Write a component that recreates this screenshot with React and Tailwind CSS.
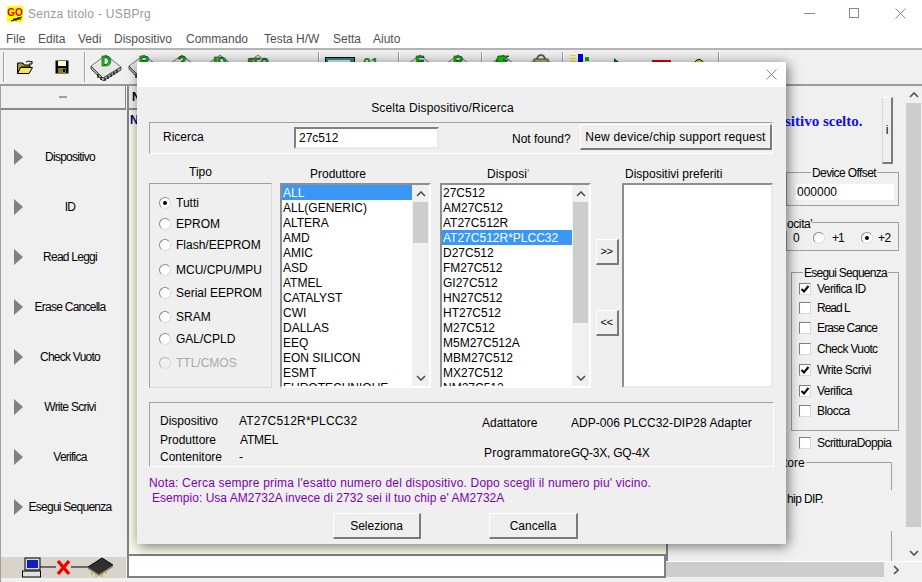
const font = { fontFamily: '"Liberation Sans", Arial, sans-serif' };

function Chip({ label, size = 14 }) {
  return (
    <svg width="32" height="28" viewBox="0 0 32 28" className="shrink-0">
      <path d="M1 13 L16 2 L31 14 L13 25 Z" fill="#e6e6e6" stroke="#444" strokeWidth="0.7" />
      <path d="M1 13 L1 16 L13 28 L31 17 L31 14 L13 25 Z" fill="#a8a8a8" stroke="#333" strokeWidth="0.8" />
      <path d="M8 21 L8 25 M11 24 L11 27 M15 25 L15 28 M18 23 L18 26 M21 21 L21 24 M24 19 L24 22 M27 17 L27 20" stroke="#111" strokeWidth="1.3" />
      <text x="16" y="13" fontSize={size} fontWeight="700" textAnchor="middle" fill="#00e000" stroke="#000" strokeWidth="0.5" fontFamily="Liberation Sans">{label}</text>
    </svg>
  );
}

function Sep() {
  return <div className="w-[2px] h-[30px] border-l border-r border-l-[#a0a0a0] border-r-white shrink-0" />;
}

function Cell({ children }) {
  return <div className="w-[38px] flex justify-center shrink-0">{children}</div>;
}

function Triangle() {
  return <div className="w-0 h-0 border-y-[8px] border-y-transparent border-l-[9px] border-l-[#808080] shrink-0" />;
}

function SideItem({ label }) {
  return (
    <div className="h-[50px] flex items-center pl-[13px]">
      <Triangle />
      <div className="flex-1 text-center text-[12px] tracking-[-0.75px] text-black pr-[9px] whitespace-nowrap">{label}</div>
    </div>
  );
}

function Radio({ checked, disabled }) {
  return (
    <span className={`w-[12px] h-[12px] rounded-full border ${disabled ? "border-[#b0b0b0] bg-[#efefef]" : "border-[#8a8a8a] bg-white"} border-r-[#dcdcdc] border-b-[#dcdcdc] flex items-center justify-center shrink-0`}>
      {checked && <span className="w-[4px] h-[4px] rounded-full bg-black" />}
    </span>
  );
}

function RadioRow({ label, checked, disabled, mt }) {
  return (
    <div className={`flex items-center gap-[5px] h-[15px] ${mt}`}>
      <Radio checked={checked} disabled={disabled} />
      <span className={disabled ? "text-[#a8a8a8]" : "text-black"}>{label}</span>
    </div>
  );
}

function Check({ label, checked, mt, track = "tracking-[-0.55px]" }) {
  return (
    <div className={`flex items-center gap-[6px] h-[15px] ${mt}`}>
      <span className="w-[12px] h-[12px] bg-white border border-[#808080] border-r-[#d8d8d8] border-b-[#d8d8d8] flex items-center justify-center shrink-0">
        {checked && (
          <svg width="10" height="10" viewBox="0 0 10 10"><path d="M1.5 5 L4 7.5 L8.5 2" fill="none" stroke="#000" strokeWidth="2" /></svg>
        )}
      </span>
      <span className={`text-black whitespace-nowrap ${track}`}>{label}</span>
    </div>
  );
}

function Arrow({ dir }) {
  return (
    <svg width="10" height="6" viewBox="0 0 10 6">
      <path d={dir === "up" ? "M1 5 L5 1 L9 5" : "M1 1 L5 5 L9 1"} fill="none" stroke="#505050" strokeWidth="1.6" />
    </svg>
  );
}

function Scrollbar({ thumb }) {
  return (
    <div className="w-[17px] shrink-0 bg-[#f0f0f0] flex flex-col">
      <div className="h-[17px] flex items-center justify-center"><Arrow dir="up" /></div>
      <div className="flex-1 pl-[1px]">
        <div className={`w-[15px] bg-[#cdcdcd] ${thumb}`} />
      </div>
      <div className="h-[17px] flex items-center justify-center"><Arrow dir="down" /></div>
    </div>
  );
}

function ListBox({ items, selected, thumb }) {
  return (
    <div className="h-[205px] w-[151px] bg-white border-2 border-[#8f8f8f] border-r-white border-b-white flex overflow-hidden">
      <div className="flex-1 min-w-0 overflow-hidden">
        {items.map((it) => (
          <div key={it} className={`h-[15px] leading-[16px] pl-[1px] whitespace-nowrap text-[12px] ${it === selected ? "bg-[#3b97f5] text-white" : "text-black"}`}>{it}</div>
        ))}
      </div>
      <Scrollbar thumb={thumb} />
    </div>
  );
}

function RaisedBtn({ children, className = "" }) {
  return (
    <div className={`bg-[#efefef] border border-white border-r-2 border-b-2 border-r-[#7a7a7a] border-b-[#7a7a7a] flex items-center justify-center text-black text-[12px] shrink-0 ${className}`}>
      {children}
    </div>
  );
}

const producers = ["ALL","ALL(GENERIC)","ALTERA","AMD","AMIC","ASD","ATMEL","CATALYST","CWI","DALLAS","EEQ","EON SILICON","ESMT","EUROTECHNIQUE"];
const devices = ["27C512","AM27C512","AT27C512R","AT27C512R*PLCC32","D27C512","FM27C512","GI27C512","HN27C512","HT27C512","M27C512","M5M27C512A","MBM27C512","MX27C512","NM27C512"];

function Dialog() {
  return (
    <div className="absolute left-[137px] top-[62px] w-[649px] h-[482px] bg-[#efefef] shadow-[2px_2px_12px_rgba(0,0,0,0.55)] flex flex-col text-[12px] text-black">
      <div className="h-[25px] bg-white flex justify-end items-center pr-[9px] shrink-0">
        <svg width="11" height="11" viewBox="0 0 11 11"><path d="M0.5 0.5 L10.5 10.5 M10.5 0.5 L0.5 10.5" stroke="#8a8a8a" strokeWidth="1" /></svg>
      </div>
      <div className="flex-1 flex flex-col px-[12px]">
        <div className="h-[35px] pt-[14px] leading-[15px] text-center pr-[38px] tracking-[0.15px]">Scelta Dispositivo/Ricerca</div>

        <div className="h-[32px] w-[624px] border border-[#a0a0a0] border-r-white border-b-white flex items-center">
          <span className="ml-[13px] w-[131px] -mt-[2px]">Ricerca</span>
          <div className="w-[145px] h-[22px] bg-white border-2 border-[#808080] border-r-[#e8e8e8] border-b-[#e8e8e8] pl-[3px] leading-[19px]">27c512</div>
          <span className="ml-[73px] mt-[1px] w-[68px] whitespace-nowrap">Not found?</span>
          <RaisedBtn className="w-[192px] h-[26px] -mt-[2px] tracking-[0.2px] pt-[1px]">New device/chip support request</RaisedBtn>
        </div>

        <div className="flex mt-[11px] h-[17px] leading-[15px]">
          <div className="w-[123px] text-center pr-[20px]">Tipo</div>
          <div className="w-[8px]" />
          <div className="w-[151px] pl-[30px] pt-[2px]">Produttore</div>
          <div className="w-[9px]" />
          <div className="w-[151px] pl-[47px] pt-[2px] tracking-[0.1px]">Disposi<span className="opacity-50">'</span></div>
          <div className="w-[31px]" />
          <div className="pl-[3px] pt-[2px]">Dispositivi preferiti</div>
        </div>

        <div className="flex mt-[1px]">
          <div className="w-[123px] h-[205px] border border-[#a0a0a0] border-r-[#d8d8d8] border-b-[#d8d8d8] pl-[9px] pt-[11px] shrink-0">
            <RadioRow label="Tutti" checked />
            <RadioRow label="EPROM" mt="mt-[6px]" />
            <RadioRow label="Flash/EEPROM" mt="mt-[6px]" />
            <RadioRow label="MCU/CPU/MPU" mt="mt-[10px]" />
            <RadioRow label="Serial EEPROM" mt="mt-[8px]" />
            <RadioRow label="SRAM" mt="mt-[9px]" />
            <RadioRow label="GAL/CPLD" mt="mt-[7px]" />
            <RadioRow label="TTL/CMOS" disabled mt="mt-[9px]" />
          </div>
          <div className="w-[8px] shrink-0" />
          <ListBox items={producers} selected="ALL" thumb="h-[41px]" />
          <div className="w-[9px] shrink-0" />
          <ListBox items={devices} selected="AT27C512R*PLCC32" thumb="h-[121px]" />
          <div className="w-[31px] shrink-0 flex flex-col items-center pl-[1px] pt-[56px]">
            <RaisedBtn className="w-[23px] h-[26px]"><span className="text-[11px] tracking-[-0.5px]">&gt;&gt;</span></RaisedBtn>
            <RaisedBtn className="w-[23px] h-[26px] mt-[45px]"><span className="text-[11px] tracking-[-0.5px]">&lt;&lt;</span></RaisedBtn>
          </div>
          <div className="w-[151px] h-[205px] bg-white border-2 border-[#8f8f8f] border-r-[#e8e8e8] border-b-[#e8e8e8]" />
        </div>

        <div className="mt-[14px] w-[625px] h-[65px] border border-[#a0a0a0] border-r-white border-b-white flex shrink-0">
          <div className="w-[320px] pl-[10px] pt-[11px] leading-[15px]">
            <div className="flex"><span className="w-[79px]">Dispositivo</span><span className="tracking-[0.2px]">AT27C512R*PLCC32</span></div>
            <div className="flex mt-[4px]"><span className="w-[79px]">Produttore</span><span className="pl-[1px] tracking-[-0.2px]">ATMEL</span></div>
            <div className="flex mt-[2px]"><span className="w-[79px]">Contenitore</span><span>-</span></div>
          </div>
          <div className="flex-1 pt-[13px] leading-[15px]">
            <div className="flex pl-[12px]"><span className="w-[89px]">Adattatore</span><span className="tracking-[0.05px]">ADP-006 PLCC32-DIP28 Adapter</span></div>
            <div className="flex pl-[14px] mt-[15px]"><span className="tracking-[0.25px]">Programmatore</span><span className="tracking-[-0.2px]">GQ-3X, GQ-4X</span></div>
          </div>
        </div>

        <div className="mt-[9px] leading-[15px] text-[#8000b0] whitespace-nowrap">
          <div className="tracking-[0.18px]">Nota: Cerca sempre prima l'esatto numero del dispositivo. Dopo scegli il numero piu' vicino.</div>
          <div className="pl-[3px] tracking-[0.03px]">Esempio: Usa AM2732A invece di 2732 sei il tuo chip e' AM2732A</div>
        </div>

        <div className="flex mt-[7px]">
          <RaisedBtn className="ml-[184px] w-[88px] h-[26px]">Seleziona</RaisedBtn>
          <RaisedBtn className="ml-[68px] w-[89px] h-[26px]">Cancella</RaisedBtn>
        </div>
      </div>
    </div>
  );
}

function Toolbar() {
  return (
    <div className="h-[36px] bg-[#f0f0f0] border-t-2 border-[#b4b4b4] flex items-center shrink-0 pl-[3px]">
      <Sep />
      <div className="flex items-center w-[79px] shrink-0 pl-[12px] gap-[22px]">
        <svg width="16" height="14" viewBox="0 0 16 14">
          <path d="M0.5 3 L6 3 L7 5 L13 5 L13 7 L4 7 L0.5 13 Z" fill="#a0a030" stroke="#000" />
          <path d="M3.5 7.5 L15.5 7.5 L12 13.5 L0.5 13.5 Z" fill="#f4e070" stroke="#000" />
          <path d="M9 2 Q12 0 14 2 L15 1 L15 4 L12 4" fill="none" stroke="#000" />
        </svg>
        <svg width="14" height="14" viewBox="0 0 14 14">
          <rect x="0.5" y="0.5" width="13" height="13" fill="#000" />
          <rect x="3" y="1" width="8" height="5" fill="#ffffc0" />
          <rect x="3" y="8" width="8" height="5" fill="#808020" />
          <rect x="8" y="9" width="2" height="3" fill="#000" />
        </svg>
      </div>
      <Sep />
      <div className="flex items-center pl-[1px] w-[232px] shrink-0">
        <Cell><Chip label="D" /></Cell>
        <Cell><Chip label="R" /></Cell>
        <Cell><Chip label="?" /></Cell>
        <Cell><Chip label="ID" size={13} /></Cell>
        <Cell><Chip label="SEQ" size={10} /></Cell>
      </div>
      <Sep />
      <div className="flex items-start self-start gap-[8px] pl-[5px] pt-[7px] w-[78px] shrink-0">
        <div className="w-[30px] h-[16px] bg-[#2a8a90] border border-black p-[2px]">
          <div className="w-[22px] h-[10px] bg-[#e8e8e8]" />
        </div>
        <span className="text-[14px] font-bold text-[#00a000] leading-none -mt-[1px] whitespace-nowrap">01<span className="text-[10px] text-[#006000]">..</span></span>
      </div>
      <Sep />
      <div className="flex items-center pl-[1px] w-[81px] shrink-0">
        <Cell><Chip label="E" /></Cell>
        <Cell><Chip label="R" /></Cell>
      </div>
      <Sep />
      <div className="flex items-center pl-[1px] w-[79px] shrink-0">
        <Cell>
          <svg width="32" height="28" viewBox="0 0 32 28">
            <path d="M1 13 L16 2 L31 14 L13 25 Z" fill="#e6e6e6" stroke="#444" strokeWidth="0.7" />
            <path d="M11 3 L22 3 L16 7 L21 7 L10 15 L13 9 L9 9 Z" fill="#00d000" stroke="#000" strokeWidth="0.6" />
          </svg>
        </Cell>
        <Cell>
          <svg width="32" height="28" viewBox="0 0 32 28">
            <path d="M1 13 L16 2 L31 14 L13 25 Z" fill="#e6e6e6" stroke="#444" strokeWidth="0.7" />
            <path d="M12 7 Q12 2 16 2 Q20 2 20 7" fill="none" stroke="#555" strokeWidth="1.5" />
            <rect x="9" y="6" width="14" height="8" fill="#b8a860" stroke="#333" strokeWidth="0.8" />
          </svg>
        </Cell>
      </div>
      <Sep />
      <div className="flex items-start self-start w-[154px] shrink-0 pl-[6px] pt-[4px]">
        <div className="w-[19px] h-[14px] flex gap-[2px] shrink-0">
          <div className="w-[8px] flex flex-col gap-[2px] pt-[1px]">
            <div className="h-[1px] bg-[#f0e000]" />
            <div className="h-[1px] bg-[#f0e000]" />
            <div className="h-[1px] bg-[#f0e000]" />
          </div>
          <div className="w-[6px] h-[10px] bg-[#0000e0]" />
          <div className="w-[6px] h-[4px] mt-[3px] bg-[#00b000]" />
        </div>
        <div className="ml-[25px] mt-[4px] w-0 h-0 border-y-[5px] border-y-transparent border-l-[6px] border-l-[#006000] shrink-0" />
        <div className="ml-[32px] mt-[6px] w-[19px] h-[6px] bg-[#e00000] shrink-0" />
        <div className="ml-[23px] mt-[5px] w-[10px] h-[10px] rounded-full bg-[#f0e000] border border-black shrink-0" />
      </div>
      <Sep />
    </div>
  );
}

const menus = [
  ["File", "w-[32px]"],
  ["Edita", "w-[40px]"],
  ["Vedi", "w-[36px]"],
  ["Dispositivo", "w-[72px]"],
  ["Commando", "w-[78px]"],
  ["Testa H/W", "w-[69px]"],
  ["Setta", "w-[40px]"],
  ["Aiuto", "w-[40px]"],
];

export default function App() {
  return (
    <div className="relative w-[922px] h-[582px] overflow-hidden bg-[#f0f0f0] flex flex-col text-[12px]" style={font}>
      <div className="h-[30px] bg-white flex items-center shrink-0 pl-[7px]">
        <svg width="16" height="16" viewBox="0 0 16 16" className="-mt-[2px] shrink-0">
          <rect width="16" height="16" fill="#ffff00" />
          <text x="8" y="10" fontSize="10" fontWeight="700" textAnchor="middle" fill="#e00000" fontFamily="Liberation Sans">GO</text>
          <path d="M4 15 L15 11 M7 12 V15 M9 12 V15 M11 11 V14 M13 11 V14" stroke="#000" strokeWidth="1" />
        </svg>
        <span className="ml-[5px] text-[12px] text-[#9a9a9a] tracking-[0.3px] -mt-[3px]">Senza titolo - USBPrg</span>
        <div className="ml-auto flex items-center pr-[16px] -mt-[4px]">
          <div className="w-[11px] h-px bg-[#8a8a8a]" />
          <div className="ml-[34px] w-[10px] h-[10px] border border-[#8a8a8a]" />
          <svg className="ml-[36px]" width="11" height="11" viewBox="0 0 11 11"><path d="M0.5 0.5 L10.5 10.5 M10.5 0.5 L0.5 10.5" stroke="#8a8a8a" strokeWidth="1" /></svg>
        </div>
      </div>
      <div className="h-[18px] bg-white flex items-center pl-[6px] text-[#505050] shrink-0 whitespace-nowrap">
        {menus.map(([m, w]) => <span key={m} className={w}>{m}</span>)}
      </div>
      <Toolbar />

      <div className="flex-1 flex border-t-2 border-[#9a9a9a] min-h-0">
        <div className="w-[126px] border-l border-[#a0a0a0] flex flex-col shrink-0">
          <div className="h-[24px] border-r border-b-2 border-b-[#8a8a8a] border-r-[#8a8a8a] flex items-center justify-center shrink-0">
            <div className="w-[8px] h-[2px] bg-[#a0a0a0]" />
          </div>
          <div className="pt-[22px]">
            {["Dispositivo","ID","Read Leggi","Erase Cancella","Check Vuoto","Write Scrivi","Verifica","Esegui Sequenza"].map((s) => <SideItem key={s} label={s} />)}
          </div>
          <div className="mt-auto mb-[4px] h-[21px] bg-[#d8d4cc] flex items-center pl-[21px]">
            <svg width="92" height="21" viewBox="0 0 92 21">
              <rect x="3" y="1" width="15" height="12" fill="#d8d8d8" stroke="#000" />
              <rect x="5" y="3" width="11" height="8" fill="#1020c0" />
              <rect x="0.5" y="14" width="18" height="6" fill="#e0e0e0" stroke="#000" />
              <path d="M18 10 H34 M49 10 H66" stroke="#000" />
              <path d="M36 4 L47 17 M47 4 L36 17" stroke="#f00000" strokeWidth="3.4" />
              <path d="M66 10 L80 1 L91 8 L77 17 Z" fill="#303030" stroke="#000" />
              <path d="M66 10 L66 12 L77 19 L91 10 L91 8 L77 17 Z" fill="#808080" />
              <path d="M70 15 L70 18 M74 17 L74 20 M80 17 L80 20 M84 14 L84 17" stroke="#d0b000" strokeWidth="1.4" />
            </svg>
          </div>
        </div>

        <div className="w-[539px] ml-[1px] flex flex-col shrink-0">
          <div className="h-[24px] border-l-2 border-[#8a8a8a] border-b-2 pl-[3px] flex items-center text-black font-bold shrink-0">N</div>
          <div className="flex-1 bg-[#fafae8] border-l-2 border-[#808080] pl-[1px] pt-[3px] text-[#000080] font-bold leading-[14px]">N</div>
          <div className="h-[24px] mb-[4px] border-2 border-[#808080] bg-white shrink-0" />
        </div>

        <div className="flex-1 flex flex-col min-w-0">
          <div className="flex-1 flex min-h-0">
            <div className="flex-1 flex flex-col border-l-2 border-[#808080] min-w-0 items-end">
              <div className="w-full flex justify-end pr-[12px] pt-[11px] relative h-[86px] shrink-0">
                <span className="absolute left-[117px] top-[24px] text-[15px] font-bold text-[#1010f0] whitespace-nowrap" style={{ fontFamily: '"Liberation Serif", serif' }}>sitivo scelto.</span>
                <RaisedBtn className="w-[11px] h-[67px] border-l-[#d8d8d8]">i</RaisedBtn>
              </div>
              <div className="w-[113px] mr-[6px] h-[34px] border border-[#a0a0a0] relative flex items-end pb-[5px] pl-[9px] shrink-0">
                <span className="absolute top-[-7px] left-[24px] bg-[#f0f0f0] px-[1px] leading-[14px] tracking-[-0.6px] whitespace-nowrap">Device Offset</span>
                <div className="w-[98px] h-[16px] bg-white leading-[17px] pl-[1px]">000000</div>
              </div>
              <div className="w-[113px] mr-[6px] mt-[16px] h-[29px] border border-[#a0a0a0] relative flex items-center shrink-0">
                <span className="absolute top-[-6px] -left-[1px] bg-[#f0f0f0] leading-[14px] tracking-[-0.4px] pl-[1px]">ocita'</span>
                <div className="flex items-center ml-[6px] mt-[3px] w-full whitespace-nowrap">
                  <span className="w-[7px]">0</span>
                  <span className="ml-[13px]"><Radio /></span>
                  <span className="ml-[7px] w-[29px] tracking-[-1px]">+1</span>
                  <Radio checked />
                  <span className="ml-[5px] tracking-[-0.6px]">+2</span>
                </div>
              </div>
              <div className="w-[108px] mr-[6px] mt-[21px] h-[159px] border border-[#a0a0a0] relative pl-[7px] pt-[8px] shrink-0">
                <span className="absolute top-[-7px] left-[11px] bg-[#f0f0f0] px-[1px] leading-[14px] tracking-[-0.75px] whitespace-nowrap">Esegui Sequenza</span>
                <Check label="Verifica ID" checked />
                <Check label="Read L" mt="mt-[4px]" track="tracking-[-1px]" />
                <Check label="Erase Cance" mt="mt-[5px]" track="tracking-[-0.85px]" />
                <Check label="Check Vuotc" mt="mt-[6px]" track="tracking-[-0.65px]" />
                <Check label="Write Scrivi" checked mt="mt-[6px]" />
                <Check label="Verifica" checked mt="mt-[6px]" />
                <Check label="Blocca" mt="mt-[5px]" />
              </div>
              <div className="w-[108px] mr-[6px] pl-[8px] mt-[4px] h-[15px] shrink-0">
                <Check label="ScritturaDoppia" />
              </div>
              <div className="w-[227px] mr-[13px] mt-[12px] flex-1 border-t border-r border-[#a0a0a0] relative">
                <span className="absolute top-[-7px] left-[119px] bg-[#f0f0f0] leading-[14px] pr-[1px]">tore</span>
                <span className="absolute top-[27px] left-[122px] whitespace-nowrap tracking-[-0.6px]">hip DIP.</span>
                <div className="absolute -right-[1px] top-[27px] w-[1px] h-[41px] bg-[#f0f0f0]" />
              </div>
            </div>
            <Scrollbar thumb="h-[424px]" />
          </div>
          <div className="h-[16px] mb-[5px] flex shrink-0 bg-[#f0f0f0] border-t border-white">
            <div className="flex-1 bg-[#cdcdcd]" />
            <div className="w-[21px] pl-[3px] flex items-center justify-center">
              <svg width="6" height="10" viewBox="0 0 6 10"><path d="M1 1 L5 5 L1 9" fill="none" stroke="#505050" strokeWidth="1.6" /></svg>
            </div>
            <div className="w-[17px]" />
          </div>
        </div>
      </div>
      <Dialog />
    </div>
  );
}
